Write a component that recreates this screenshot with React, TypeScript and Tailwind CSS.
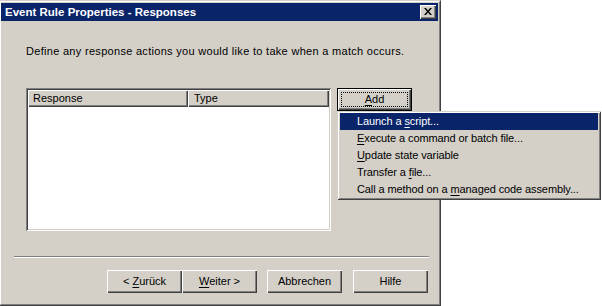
import React from "react";

const btnBevel =
  "shadow-[inset_1px_1px_0_#ffffff,inset_-1px_-1px_0_#404040,inset_-2px_-2px_0_#808080]";

function PushButton({ children, className = "" }: { children: React.ReactNode; className?: string }) {
  return (
    <div
      className={`w-[75px] h-[23px] bg-[#d4d0c8] flex items-center justify-center text-[11px] text-black ${btnBevel} ${className}`}
    >
      <span className="whitespace-pre">{children}</span>
    </div>
  );
}

const U = ({ children }: { children: React.ReactNode }) => (
  <span className="underline underline-offset-[2px] decoration-1">{children}</span>
);

export default function App() {
  const items: React.ReactNode[] = [
    <>Launch a <U>s</U>cript...</>,
    <><U>E</U>xecute a command or batch file...</>,
    <><U>U</U>pdate state variable</>,
    <>Transfer a <U>f</U>ile...</>,
    <>Call a method on a <U>m</U>anaged code assembly...</>,
  ];
  return (
    <div className="w-[602px] h-[306px] bg-white relative overflow-hidden font-['Liberation_Sans',Arial,sans-serif] text-black">
      <div className="w-[441px] h-[306px] bg-[#d4d0c8] border-t border-r border-b border-t-[#d4d0c8] border-r-[#404040] border-b-[#404040] flex flex-col">
        <div className="flex-1 flex flex-col border-t border-l border-r border-b border-t-white border-l-white border-r-[#808080] border-b-[#808080] pt-[1px] pr-[1px]">
          {/* Title bar */}
          <div className="h-[18px] bg-[#0a246a] flex items-center justify-between">
            <span className="pl-[4px] text-white font-bold text-[11.5px] leading-[18px] whitespace-nowrap">
              Event Rule Properties - Responses
            </span>
            <div className={`w-[16px] h-[14px] mr-[2px] bg-[#d4d0c8] flex items-center justify-center ${btnBevel}`}>
              <svg width="8" height="7" viewBox="0 0 8 7" className="mb-[1px]">
                <path d="M0 0h2l2 2.5L6 0h2L5 3.5 8 7H6L4 4.5 2 7H0l3-3.5z" fill="#000" />
              </svg>
            </div>
          </div>

          {/* Body */}
          <div className="pl-[25px] pt-[24px] text-[11px] leading-[13px] tracking-[0.3px] whitespace-nowrap">
            Define any response actions you would like to take when a match occurs.
          </div>

          <div className="flex pl-[25px] mt-[30px] gap-[6px]">
            <div className="w-[305px] h-[143px] bg-white p-[2px] shadow-[inset_1px_1px_0_#808080,inset_-1px_-1px_0_#ffffff,inset_2px_2px_0_#404040,inset_-2px_-2px_0_#d4d0c8]">
              <div className="flex h-[17px]">
                <div className="w-[160px] h-[17px] bg-[#d4d0c8] text-[11px] leading-[17px] pl-[5px] shadow-[inset_1px_1px_0_#ffffff,inset_-1px_-1px_0_#404040,inset_-2px_-2px_0_#808080]">
                  Response
                </div>
                <div className="w-[141px] h-[17px] bg-[#d4d0c8] text-[11px] leading-[17px] pl-[6px] shadow-[inset_1px_1px_0_#ffffff,inset_-1px_-1px_0_#404040,inset_-2px_-2px_0_#808080]">
                  Type
                </div>
              </div>
            </div>
            <div className="relative w-[75px] h-[23px] border border-black bg-[#d4d0c8] flex items-center justify-center text-[11px] shadow-[inset_1px_1px_0_#ffffff,inset_-1px_-1px_0_#404040,inset_-2px_-2px_0_#808080]">
              <span className="absolute left-[3px] top-[3px] right-[3px] bottom-[3px] border border-dotted border-black" />
              <span className="relative"><U>A</U>dd</span>
            </div>
          </div>

          <div className="ml-[13px] mt-[25px] w-[415px] h-[2px] border-t border-b border-t-[#808080] border-b-white" />

          <div className="flex mt-[12px] pl-[106px]">
            <PushButton>&lt; <U>Z</U>urück</PushButton>
            <PushButton><U>W</U>eiter &gt;</PushButton>
            <PushButton className="ml-[10px]">Abbrechen</PushButton>
            <PushButton className="ml-[11px]">Hilfe</PushButton>
          </div>
        </div>
      </div>

      {/* Popup menu */}
      <div className="absolute left-[337px] top-[111px] w-[264px] h-[89px] bg-[#d4d0c8] p-[2px] shadow-[inset_1px_1px_0_#d4d0c8,inset_-1px_-1px_0_#404040,inset_2px_2px_0_#ffffff,inset_-2px_-2px_0_#808080]">
        <div className="px-[1px]">
          {items.map((it, i) => (
            <div
              key={i}
              className={`h-[17px] leading-[17px] text-[11px] pl-[17px] tracking-[-0.1px] whitespace-nowrap ${i === 0 ? "bg-[#0a246a] text-white" : "text-black"}`}
            >
              {it}
            </div>
          ))}
        </div>
      </div>
    </div>
  );
}
